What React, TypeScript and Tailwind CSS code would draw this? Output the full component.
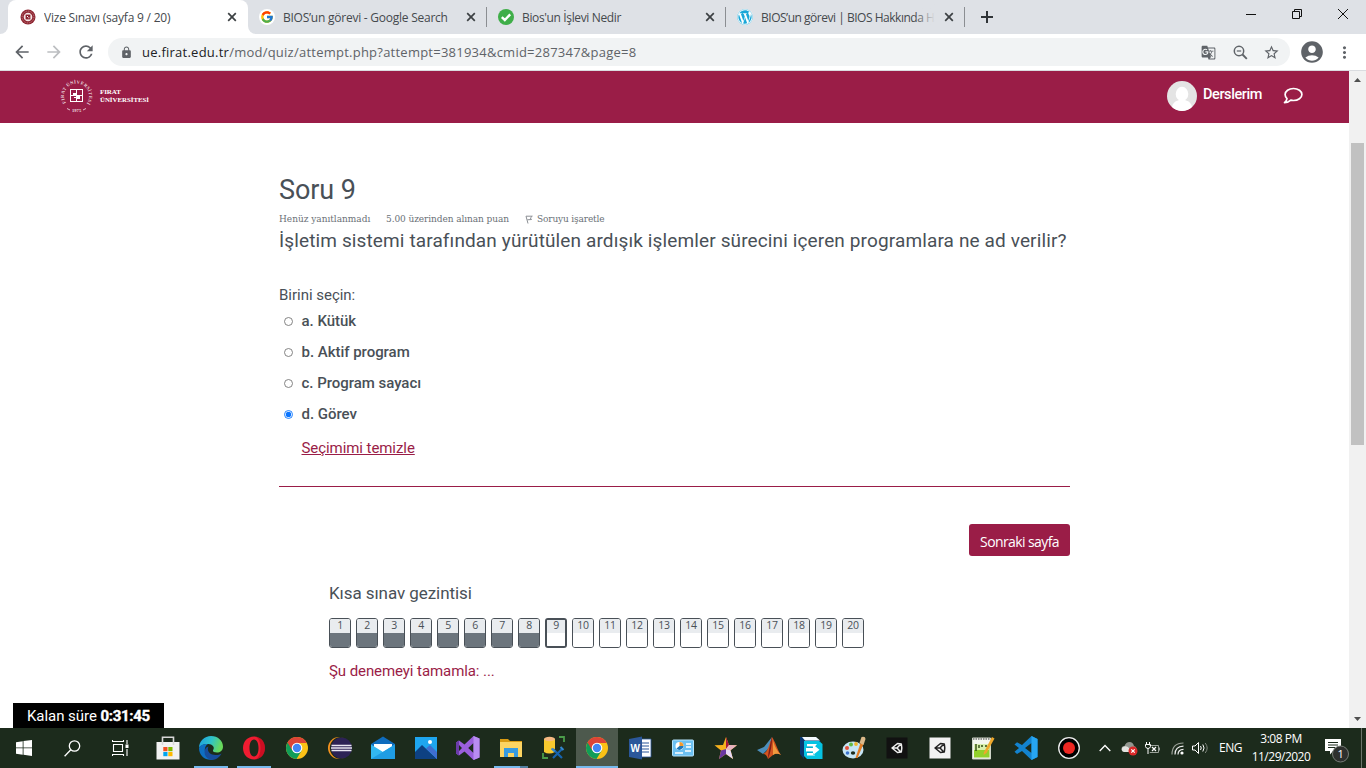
import React from "react";
import { FcGoogle } from "react-icons/fc";
import { FaWordpress } from "react-icons/fa";
import { MdLock, MdArrowBack, MdArrowForward, MdRefresh, MdStarBorder, MdGTranslate, MdAccountCircle, MdMoreVert } from "react-icons/md";

const UI = "font-['Open_Sans','Noto_Sans',sans-serif]";
const RB = "font-['Roboto',sans-serif]";

function CloseX() {
  return (
    <svg width="10" height="10" viewBox="0 0 10 10" className="shrink-0">
      <path d="M1.2 1.2 8.8 8.8M8.8 1.2 1.2 8.8" stroke="#3c4043" strokeWidth="1.7" fill="none" />
    </svg>
  );
}

function UniSeal() {
  return (
    <svg width="16" height="16" viewBox="0 0 16 16">
      <circle cx="8" cy="8" r="7.5" fill="#8d2430" />
      <circle cx="8" cy="8" r="5.9" fill="none" stroke="#c9898c" strokeWidth=".9" strokeDasharray="1 .8" />
      <circle cx="8" cy="8" r="4.3" fill="#f4e6e6" />
      <rect x="5.6" y="5.6" width="4.8" height="4.8" fill="#8d2430" />
      <path d="M7 7h1v1H7zM8.300 8.200h1v1h-1z" fill="#fff" />
    </svg>
  );
}

function GreenCheck() {
  return (
    <svg width="16" height="16" viewBox="0 0 16 16">
      <circle cx="8" cy="8" r="8" fill="#3fae49" />
      <path d="M3.8 8.2 6.8 11l5.4-5.6" stroke="#fff" strokeWidth="2.4" fill="none" />
    </svg>
  );
}

function Tab({ icon, title, className, fade }: { icon: React.ReactNode; title: string; className: string; fade?: boolean }) {
  return (
    <div className="flex h-[34px] w-[239px] shrink-0 items-center pl-3">
      <span className="flex w-4 shrink-0 justify-center">{icon}</span>
      <span className={`${UI} relative -top-px ml-2 w-[174px] overflow-hidden whitespace-nowrap`}>
        <span className={"text-[12px] text-[#45494d] " + className}>{title}</span>
        {fade && <span className="absolute inset-y-0 right-0 w-5 bg-gradient-to-r from-transparent to-[#dee1e6]" />}
      </span>
      <span className="ml-[9px] flex"><CloseX /></span>
    </div>
  );
}

function TabStrip() {
  return (
    <div className="flex h-[34px] bg-[#dee1e6]">
      <div className="flex w-2 items-end bg-white"><div className="h-full w-2 rounded-br-lg bg-[#dee1e6]" /></div>
      <div className="w-60 bg-[#dee1e6]"><div className="rounded-t-lg bg-white">
        <Tab icon={<UniSeal />} title="Vize Sınavı (sayfa 9 / 20)" className="tracking-[-0.22px]" />
      </div></div>
      <div className="-mr-2 w-2 bg-white"><div className="h-full rounded-bl-lg bg-[#dee1e6]" /></div>
      <div className="z-10 -ml-px flex items-center">
        <Tab icon={<span className="flex h-4 w-4 items-center justify-center rounded-full bg-white"><FcGoogle size={14} /></span>} title="BIOS’un görevi - Google Search" className="tracking-[-0.24px]" />
        <div className="-mr-px h-5 w-px bg-[#8b8e92]" />
        <Tab icon={<GreenCheck />} title="Bios'un İşlevi Nedir" className="tracking-[-0.36px]" />
        <div className="-mr-px h-5 w-px bg-[#8b8e92]" />
        <Tab icon={<span className="flex rounded-full bg-white text-[#1ba7d8]"><FaWordpress size={16} /></span>} title="BIOS’un görevi | BIOS Hakkında H" className="tracking-[-0.48px]" fade />
        <div className="-mr-px h-5 w-px bg-[#8b8e92]" />
      </div>
      <svg width="12" height="12" viewBox="0 0 12 12" className="mt-[11px] ml-[17px]"><path d="M6 0v12M0 6h12" stroke="#303438" strokeWidth="2" /></svg>
      <div className="mr-[17px] ml-auto flex items-start pt-2">
        <svg width="104" height="12" viewBox="0 0 104 12" fill="none" stroke="#111">
          <path d="M1 6.5h10" /><path d="M47.5 3.500h7v7h-7z M49.500 3.500v-2h7v7h-2" /><path d="m93 1 10 10m0-10-10 10" />
        </svg>
      </div>
    </div>
  );
}

function Toolbar() {
  return (
    <div className="flex h-[37px] items-center border-b border-[#dadce0] bg-white text-[#5f6368]">
      <MdArrowBack size={20} className="ml-3" />
      <MdArrowForward size={20} className="ml-3 text-[#bcbec1]" />
      <MdRefresh size={20} className="ml-3" />
      <div className="ml-3 flex h-7 w-[1182px] items-center rounded-full bg-[#f1f3f4] pl-3">
        <MdLock size={13} />
        <span className={`${UI} mt-0.5 ml-[9px] text-[13px] whitespace-nowrap tracking-[0.24px]`}>
          <span className="text-[#202124]">ue.firat.edu.tr</span>/mod/quiz/attempt.php?attempt=381934&amp;cmid=287347&amp;page=8
        </span>
        <div className="mr-[10px] ml-auto flex items-center gap-[17px]">
          <MdGTranslate size={15} />
          <svg width="15" height="15" viewBox="0 0 15 15" fill="none" stroke="#5f6368"><circle cx="6" cy="6" r="4.700" strokeWidth="1.500" /><path d="m9.500 9.500 4.300 4.300" strokeWidth="1.900" /><path d="M3.800 6h4.400" strokeWidth="1.200" /></svg>
          <MdStarBorder size={17} className="-ml-0.5" />
        </div>
      </div>
      <MdAccountCircle size={26} className="ml-[9px]" />
      <MdMoreVert size={19} className="ml-[10px]" />
    </div>
  );
}

function FiratLogo() {
  return (
    <svg width="94" height="34" viewBox="0 0 94 34" fill="#fff">
      <defs><path id="ring" d="M17.500 29.500A12.500 12.500 0 1 1 17.600 29.500" /></defs>
      <text fontFamily="Liberation Serif" fontSize="4.600" fontWeight="700" fillOpacity=".85"><textPath href="#ring" startOffset="12" textLength="54">FIRAT ÜNİVERSİTESİ</textPath></text>
      <text x="13" y="32.500" fontSize="4.600" fontFamily="Liberation Serif" fontWeight="700" fillOpacity=".85">1975</text>
      <path d="M8 29.500 11 31M27 29.500 24 31" stroke="#fff" strokeWidth=".7" />
      <g shapeRendering="crispEdges">
        <path d="M11 10h13v13H11zm1 1v11h11V11z" fillRule="evenodd" />
        <path d="M17 11h1v11h-1zM12 16h11v1H12zM14 14h3v2h-3zM18 17h3v3h-3zM15 18h2v1h-2z" />
      </g>
      <g fontFamily="Liberation Serif" fontSize="7" fontWeight="700">
        <text x="41" y="15" textLength="21">FIRAT</text><text x="41" y="23.200" textLength="49" lengthAdjust="spacingAndGlyphs">ÜNİVERSİTESİ</text>
      </g>
    </svg>
  );
}

function SiteHeader() {
  return (
    <header className="flex h-[52px] items-center bg-[#9a1d47] pl-[59px] text-white">
      <div className="pb-0.5"><FiratLogo /></div>
      <svg width="30" height="30" viewBox="0 0 30 30" className="mr-[6px] mb-0.5 ml-auto">
        <circle cx="15" cy="15" r="15" fill="#e4e4e4" />
        <ellipse cx="15" cy="13" rx="6.300" ry="7.200" fill="#fff" />
        <path d="M5 26q1-5.500 6-6.500l4-2 4 2q5 1 6 6.500-4.500 4-10 4T5 26z" fill="#fff" />
      </svg>
      <span className={`${RB} mb-1 w-[80px] text-[14.5px] font-medium tracking-[-0.42px]`}>Derslerim</span>
      <svg width="20" height="17" viewBox="0 0 20 17" className="mr-[46px] mb-1" fill="none" stroke="#fff" strokeWidth="1.700">
        <path d="M10.500 1.500c4.700 0 8.400 2.700 8.400 6s-3.700 6-8.400 6q-1.400 0-2.700-.4-2.600 2.500-6.300 2.500 2.300-1.800 2.500-4Q2.100 9.800 2.100 7.500c0-3.300 3.700-6 8.400-6z" strokeLinejoin="round" />
      </svg>
    </header>
  );
}

function Option({ label, checked }: { label: string; checked?: boolean }) {
  return (
    <label className="flex h-[31px] items-center pl-[5px]">
      <svg width="9" height="9" viewBox="0 0 9 9">
        <circle cx="4.500" cy="4.500" r="4" fill="#fff" stroke={checked ? "#0b75ff" : "#767676"} strokeWidth=".9" />
        {checked && <circle cx="4.500" cy="4.500" r="2.700" fill="#0b75ff" />}
      </svg>
      <span className="ml-[8.5px] text-[15px] font-medium tracking-[-0.03px]">{label}</span>
    </label>
  );
}

function QuizNav() {
  return (
    <div className="flex h-[30px] gap-[5px]">
      {Array.from({ length: 20 }, (_, i) => i + 1).map((n) => (
        <div key={n} className={"flex w-[22px] flex-col overflow-hidden rounded-[3px] border-[#495057] " + (n === 9 ? "border-2" : "border")}>
          <div className={`${UI} ${n === 9 ? "h-[13px] leading-[11px]" : "h-[14px] leading-[13px]"} bg-[#e9ecef] text-center text-[10.5px] tracking-[-0.3px] text-[#495057]`}>{n}</div>
          <div className={"flex-1 " + (n < 9 ? "bg-[#6c757d]" : "bg-white")} />
        </div>
      ))}
    </div>
  );
}

function QuizPage() {
  return (
    <main className={`${RB} flex h-[605px] flex-col pt-[51px] pl-[279px] text-[#495057]`}>
      <h1 className="h-8 text-[27px] leading-[32px] tracking-[-0.1px]">Soru 9</h1>
      <div className="flex h-[23px] items-center pt-px text-[10px] text-[#6b7177] font-['DejaVu_Serif_Condensed','DejaVu_Serif',serif] [font-stretch:condensed]">
        <span className="w-[107px] whitespace-nowrap tracking-[-0.02px]">Henüz yanıtlanmadı</span>
        <span className="w-[139px] whitespace-nowrap tracking-[-0.08px]">5.00 üzerinden alınan puan</span>
        <svg width="8" height="9" viewBox="0 0 8 9" className="mt-0.5 mr-1"><path d="M1 1.200h6.300L5.300 3l1.200 1.500-4.200.3M1 1.200l2 7.300" fill="none" stroke="#8b8f94" /></svg>
        <span className="whitespace-nowrap tracking-[-0.15px]">Soruyu işaretle</span>
      </div>
      <p className="h-7 text-[19px] leading-6 tracking-[0.125px] whitespace-nowrap">İşletim sistemi tarafından yürütülen ardışık işlemler sürecini içeren programlara ne ad verilir?</p>
      <div className="mt-[28px] h-[21px] text-[15px] leading-[21px] tracking-[-0.02px]">Birini seçin:</div>
      <div className="flex flex-col">
        <Option label="a. Kütük" /><Option label="b. Aktif program" /><Option label="c. Program sayacı" /><Option label="d. Görev" checked />
      </div>
      <a className="mt-[8px] ml-[22.5px] h-[20px] self-start text-[15px] leading-[20px] tracking-[-0.07px] text-[#9a1d47] underline">Seçimimi temizle</a>
      <div className="mt-7 w-[791px] border-t border-[#9a1d47]" />
      <div className="mt-[37px] flex w-[791px] justify-end">
        <button className={`${UI} h-8 w-[101px] rounded-[3px] bg-[#9a1d47] pt-0.5 text-[14px] tracking-[-0.6px] whitespace-nowrap text-white`}>Sonraki sayfa</button>
      </div>
      <section className="pl-[50px]">
        <h2 className="mt-[26px] h-[22px] text-[17px] leading-[22px] tracking-[-0.07px]">Kısa sınav gezintisi</h2>
        <div className="mt-[14px]"><QuizNav /></div>
        <a className="mt-[12px] block text-[15px] leading-[22px] tracking-[-0.08px] text-[#9a1d47]">Şu denemeyi tamamla: ...</a>
      </section>
      <div className="mt-auto -ml-[266px] flex h-[25px] w-[151px] items-center bg-black pt-0.5 pl-[14px] text-[15px] tracking-[-0.05px] whitespace-pre text-white">Kalan süre <b className="tracking-[-0.3px] [-webkit-text-stroke:0.4px_white]">0:31:45</b></div>
    </main>
  );
}

function Scrollbar() {
  return (
    <div className="flex w-[17px] flex-col items-center bg-[#f1f1f1] py-[7px]">
      <svg width="7" height="4" viewBox="0 0 7 4"><path d="M0 4h7L3.500 0z" fill="#505050" /></svg>
      <div className="mt-[61px] h-[302px] w-[13px] bg-[#c1c1c1]" />
      <svg width="7" height="4" viewBox="0 0 7 4" className="mt-auto"><path d="M0 0h7L3.500 4z" fill="#505050" /></svg>
    </div>
  );
}

const Svg = ({ children }: { children: React.ReactNode }) => <svg width="24" height="24" viewBox="0 0 24 24">{children}</svg>;

const Chrome = () => (
  <Svg>
    <circle cx="12" cy="12" r="11" fill="#fbc116" />
    <path d="M2.500 6.500A11 11 0 0 0 11.500 23L16.700 14.500 12 12z" fill="#109d58" />
    <path d="M2.500 6.500 7.300 14.500 12 7h9.700A11 11 0 0 0 2.500 6.500z" fill="#dc4437" />
    <circle cx="12" cy="12" r="5.300" fill="#fff" /><circle cx="12" cy="12" r="4.200" fill="#4285f4" />
  </Svg>
);

const Unity = ({ dark }: { dark?: boolean }) => (
  <Svg>
    <rect x="1.500" y="1.500" width="21" height="21" fill={dark ? "#111" : "#f2f2f2"} />
    <path d="m7 12 5.500-4.500 3.800.5.500 4-.5 4-3.800.5zM7 12h5l3.800-4M12 12l3.800 4" fill="none" stroke={dark ? "#eee" : "#222"} strokeWidth="1.500" strokeLinejoin="round" />
  </Svg>
);

const apps: { name: string; icon: React.ReactNode; state?: "open" | "stack" | "active" }[] = [
  { name: "store", icon: <Svg><path d="M.5 6h23v17.500H.5z" fill="#f2f2f2" /><path d="M6.500 9V1.200h11V9" fill="none" stroke="#d8d8d8" strokeWidth="1.600" /><path d="M7.300 11h4.200v4.200H7.300z" fill="#f25022" /><path d="M12.300 11h4.200v4.200h-4.200z" fill="#7fba00" /><path d="M7.300 16h4.200v4.200H7.300z" fill="#00a4ef" /><path d="M12.300 16h4.200v4.200h-4.200z" fill="#ffb900" /></Svg> },
  { name: "edge", state: "open", icon: <Svg>
    <defs><linearGradient id="edgeTop" x1="0" x2="1" y1="0" y2=".3"><stop stopColor="#1b9de2" /><stop offset=".55" stopColor="#2fc4c8" /><stop offset="1" stopColor="#69da5c" /></linearGradient></defs>
    <path d="M0 12C0 5 5.500 0 12 0c7 0 12 5 12 10.500 0 4-3 6-6 6-2.500 0-4.500-1-4-2.300 2.500-3-1-6.200-4.500-6.200C5 8 1 9.500 0 12z" fill="url(#edgeTop)" />
    <path d="M0 12C1.500 8.500 5.500 7.800 9 8c-3 2-4 5-2.500 9 1.500 3.700 5 6 8.500 6.400C7 25.500 0 20 0 12z" fill="#0e6fc2" />
    <path d="M9.500 10.500c-2 4 1 8.500 7 8.500 2.500 0 4.500-.5 6-1.500-2.500 5-7.500 7.200-11.500 6C4 21 4 12 9.500 10.500z" fill="#174d9c" />
  </Svg> },
  { name: "opera", state: "open", icon: <Svg><path fillRule="evenodd" d="M12 .5C18.500.5 23 5.500 23 12s-4.500 11.500-11 11.500S1 18.500 1 12 5.500.5 12 .5zm0 3C9 3.500 7.500 7.500 7.500 12s1.500 8.500 4.500 8.500 4.500-4 4.500-8.500S15 3.500 12 3.500z" fill="#f01c31" /><path d="M14 .7C19.500 1.500 23 6.500 23 12s-3.500 10.500-9 11.300c3-2 4.500-6 4.500-11.300S17 2.700 14 .7z" fill="#a70014" opacity=".5" /></Svg> },
  { name: "chrome", icon: <Chrome /> },
  { name: "eclipse", icon: <Svg><circle cx="11" cy="12" r="11" fill="#f7941e" /><circle cx="12.800" cy="12" r="11" fill="#1c2b1c" /><circle cx="13.500" cy="12" r="10.500" fill="#2c2255" /><path d="M3.500 9.500H23.500M3 12h21M3.500 14.500H23.500" stroke="#e9e7f2" strokeWidth="1.300" /></Svg> },
  { name: "mail", icon: <Svg><path d="M0 8 12 .5 24 8v4H0z" fill="#0f6cbd" /><path d="M3 8h18v8H3z" fill="#fff" /><path d="M0 8.500 12 16l12-7.500V23H0z" fill="#32b8f2" /><path d="M0 23 24 8.500V23z" fill="#1f9de4" /></Svg> },
  { name: "photos", icon: <Svg><path d="M1 1h22v22H1z" fill="#1ea6f0" /><path d="m1 16 7-7 15 14H1z" fill="#0e4182" /><path d="m12 12.500 4-3.500 7 7v7z" fill="#3f6ed0" /><circle cx="16" cy="6" r="2" fill="#fff" /></Svg> },
  { name: "visual-studio", icon: <Svg><path fillRule="evenodd" d="m17.500 0 6 2.500v19l-6 2.500-9-8.500L3 19.500 0 17.500v-11l3-2 5.500 4zm0 7-5.300 5 5.300 5zM3 9v6l3-3z" fill="#9a5fdc" /><path d="m17.500 0 6 2.500v19l-6 2.500z" fill="#b98cf2" /><path d="M0 6.500 3 4.500v15l-3-2z" fill="#6b3ba9" /></Svg> },
  { name: "explorer", state: "stack", icon: <Svg><path d="M1 3h8l2 2h12v5H1z" fill="#d99b12" /><path d="M1 6h22v15H1z" fill="#fcd462" /><path d="M5 12h14v9h-4v-4H9v4H5z" fill="#379be0" /></Svg> },
  { name: "db-tools", icon: <Svg><path d="M2 3v13q5 3 11 0V3z" fill="#f7c92e" /><ellipse cx="7.500" cy="3" rx="5.500" ry="2.200" fill="#f5b982" /><path d="M17 1h5v5M1 17v5h5" fill="none" stroke="#4b9c4a" strokeWidth="1.800" /><path d="m11 13 9 9M20 13l-9 9" stroke="#1764b0" strokeWidth="2.200" /><path d="m9.500 12.500 3.500 3M18.500 11l3 3" stroke="#3387d0" strokeWidth="2" /></Svg> },
  { name: "chrome-active", state: "active", icon: <Chrome /> },
  { name: "word", icon: <Svg><path d="M12 3h11v18H12z" fill="#fff" stroke="#2b579a" strokeWidth=".8" /><path d="M14 7h7M14 10h7M14 13h7M14 16h7" stroke="#2b579a" strokeWidth="1.200" /><path d="m1 3 13-2.500v23L1 21z" fill="#2b579a" /><text x="2.500" y="16" fontSize="10" fontWeight="700" fill="#fff" fontFamily="Liberation Sans">W</text></Svg> },
  { name: "control-panel", icon: <Svg><rect x="1.500" y="4" width="21" height="16" rx="1" fill="#6cc0f1" stroke="#b5e3fb" /><circle cx="8.500" cy="10" r="4" fill="#fff" /><path d="M8.500 10V6a4 4 0 0 1 4 4z" fill="#f39a2e" /><path d="M8.500 10h4a4 4 0 0 1-7 2.500z" fill="#1d76b8" /><path d="M15 8h5M15 11h5M4 17h8M14 15h6" stroke="#fff" strokeWidth="1.500" /></Svg> },
  { name: "star", icon: <Svg><path d="m12 1 3 8 8 .3-6.500 5L19 23l-7-5-7 5 2-8.500L.5 9.300 9 9z" fill="#f6b11d" /><path d="m12 1 3 8-3 4z" fill="#a51642" /><path d="m15 9 8 .3-6.500 5L12 13z" fill="#e7b3c4" /><path d="m16.500 14.300 2.500 8.700-7-5v-5z" fill="#e7d7f6" /><path d="m12 13 0 5-7 5 2-8.500z" fill="#6a36a2" /></Svg> },
  { name: "matlab", icon: <Svg><path d="m0 14 7-3 4-5 4-5-3 11-6 6z" fill="#4c8fbd" /><path d="M15 1c3 4 5 12 9 18-4-2-6-1-8 0l-5 4c-1-3-2-5-5-5 5-2 6-9 9-17z" fill="#d35421" /><path d="M15 1c0 8-1 14-4 22 0-7 2-14 4-22z" fill="#7c1c18" /><path d="M16 5c2 6 4 10 8 14-4-2-6-1-8 0z" fill="#f09a3e" /></Svg> },
  { name: "arrow-app", icon: <Svg><path d="M5 6 2 3v14l3 6z" fill="#0a3870" /><path d="M1 1h16l5 5H5v17l-4-5z" fill="#0a3870" /><path d="M3 1h14l4 3.500H6z" fill="#f5fbff" /><path d="M5 5h15l3.500 3v15H8l-3-3z" fill="#06c3e3" /><path d="M8 8h10l-2 2.500H8zM8 19.500h8L14 17H8zM7 12h7V8.500l6.500 5.200L14 19v-3.500H7z" fill="#fff" /><path d="M8 11.200h5.500M8 16.300h5.500" stroke="#06a0c3" strokeWidth=".8" /></Svg> },
  { name: "paint", icon: <Svg><ellipse cx="11" cy="14" rx="10.500" ry="8.500" fill="#c6e5f5" /><ellipse cx="11" cy="17" rx="2.200" ry="1.700" fill="#1c2b1c" /><circle cx="5" cy="12" r="2" fill="#e3513b" /><circle cx="9" cy="8.500" r="2" fill="#62b944" /><circle cx="14" cy="8" r="1.900" fill="#efb42c" /><circle cx="5.500" cy="17" r="1.800" fill="#3d74ce" /><path d="m13.500 22 5-15 3 1-6 14z" fill="#e17d25" /><path d="m17.500 7 2-6q4-1 4 2l-2 6z" fill="#dcb98a" /></Svg> },
  { name: "unity-dark", icon: <Unity dark /> },
  { name: "unity-light", icon: <Unity /> },
  { name: "notepad", icon: <Svg><path d="M1.500 2h18v21h-18z" fill="#f3f6ee" stroke="#cfd5c8" /><path d="M3 9h15.500v12.500H3z" fill="#92d12b" /><path d="M3 8h15v6H3z" fill="#d8f0ac" /><path d="M2 3h17" stroke="#777" strokeWidth="1.500" strokeDasharray="1.500 1" /><path d="M5 8v7M8 9v3M10 10h2M14 10h2" stroke="#304a10" strokeWidth="1.400" /><path d="m13 16 8-15 2.500 1.500-8 14.500-3 2z" fill="#eea82c" /></Svg> },
  { name: "vscode", icon: <Svg><path fillRule="evenodd" d="m17.500 0 6 3v18l-6 3L8 15l-5 3-2.500-2.300L5 12 .5 8.500 3 6.200 8 9zm0 7L11 12l6.500 5z" fill="#1383cf" /><path d="m17.500 0 6 3v18l-6 3z" fill="#27a6f2" /></Svg> },
  { name: "recorder", icon: <Svg><circle cx="12" cy="12" r="10.300" fill="#000" stroke="#eee" strokeWidth="1.300" /><circle cx="12" cy="12" r="6" fill="#ee2722" /></Svg> },
];

function Tray() {
  return (
    <div className={`${UI} flex h-full flex-1 items-center text-white`}>
      <svg width="12" height="8" viewBox="0 0 12 8" className="mr-2.5 ml-[9px]"><path d="m.7 7 5.300-5.500L11.300 7" fill="none" stroke="#fff" strokeWidth="1.300" /></svg>
      <svg width="17" height="15" viewBox="0 0 17 15"><path d="M3.500 11a3 3 0 0 1 0-6q1.500-4 5-4 3.500 0 4.500 4 2.500.5 2.500 3v3z" fill="#92968f" /><path d="M3 11a2.800 2.800 0 0 1 0-5.500q3-1 5 1.500v4z" fill="#e3e3e0" /><circle cx="12" cy="10" r="4.500" fill="#db2929" /><path d="m10.300 8.300 3.400 3.400m0-3.400-3.400 3.400" stroke="#fff" strokeWidth="1.200" /></svg>
      <svg width="16" height="13" viewBox="0 0 16 13" className="ml-[7px]" fill="none" stroke="#dedede"><path d="M4.500 3.500h9v7H4.800M14.500 5.500v3" stroke="#9ba29a" /><path d="M1.500 0v2.500M4.500 0v2.500M.5 2.500h5v2q-.5 2-2.500 2t-2.500-2zM3 6.500V12" stroke="#fff" /><path d="m7 5 4 4m0-4L7 9" stroke="#fff" strokeWidth="1.200" /></svg>
      <svg width="13" height="13" viewBox="0 0 13 13" className="ml-[10px]" fill="none" stroke="#eee" strokeWidth="1.200"><path d="M1 12.500Q1 1 12.500 1" stroke="#9aa097" /><path d="M4 12.500Q4 4.500 12.500 4.200M7 12.500q0-5 5.500-5.200" /><circle cx="11" cy="11" r="1.600" fill="#fff" stroke="none" /></svg>
      <svg width="17" height="14" viewBox="0 0 17 14" className="ml-2" fill="none" stroke="#fff"><path d="M.5 5h2.500l3.500-3.500v11L3 9H.5z" /><path d="M8.500 5q1.500 2 0 4M10.800 3.500q2.500 3.500 0 7" /><path d="M13.200 2q4 5 0 10" stroke="#80877e" /></svg>
      <span className="ml-[10px] w-[25px] text-[12px] tracking-[-0.5px]">ENG</span>
      <div className="ml-[6px] w-[62px] text-center text-[12px] leading-[18px] tracking-[-0.5px] whitespace-nowrap"><div>3:08 PM</div><div>11/29/2020</div></div>
      <svg width="26" height="26" viewBox="0 0 26 26" className="mt-1 ml-[13px]"><path d="M0 2h16v12H8l-3 3.500V14H0z" fill="#fff" /><path d="M3 5.500h10M3 8h10M3 10.500h7" stroke="#1c2b1c" /><circle cx="15.500" cy="17" r="8" fill="#2e302e" stroke="#777c77" /><text x="12.500" y="21" fontSize="11" fill="#fff" fontFamily="Open Sans">1</text></svg>
      <div className="mr-[4px] ml-auto h-full w-px bg-[#6b756b]" />
    </div>
  );
}

function Taskbar() {
  return (
    <footer className="flex h-10 items-center bg-[#1c2b1c]">
      <svg width="16" height="16" viewBox="0 0 16 16" className="ml-4" fill="#fff"><path d="M0 2.200 6.700 1.200v6.300H0zM7.500 1.100 16 0v7.500H7.500zM0 8.300h6.700v6.400L0 13.700zM7.500 8.300H16V16l-8.500-1.200z" /></svg>
      <svg width="17" height="17" viewBox="0 0 17 17" className="ml-8" fill="none" stroke="#fff" strokeWidth="1.300"><circle cx="10.500" cy="6" r="5.200" /><path d="M6.800 9.800.6 16.300" /></svg>
      <svg width="17" height="16" viewBox="0 0 17 16" className="ml-[31px]" fill="none" stroke="#fff" strokeWidth="1.100"><path d="M1 1.500h10M1 14.500h10M1.500 4.500h9v7h-9zM.5 0v2M11.500 0v2M.5 14v2M11.500 14v2M15 0v4M15 9v7" /><path d="M13.500 4.500h3v3.500h-3z" fill="#fff" stroke="none" /></svg>
      <div className="ml-[18px] grid h-full w-[943px] shrink-0 grid-cols-22">
        {apps.map((a) => (
          <div key={a.name} className={"flex flex-col items-center " + (a.state === "active" ? "bg-[#4d594d]" : "")}>
            <div className="flex h-[38px] items-center pt-0.5">{a.icon}</div>
            {a.state === "open" && <div className="h-0.5 w-[34px] bg-[#76b9ed]" />}
            {a.state === "active" && <div className="h-0.5 w-full bg-[#76b9ed]" />}
            {a.state === "stack" && <div className="flex h-0.5 w-[34px]"><div className="flex-1 bg-[#76b9ed]" /><div className="w-2 bg-[#527fa0]" /></div>}
          </div>
        ))}
      </div>
      <Tray />
    </footer>
  );
}

export default function App() {
  return (
    <div className="flex h-[768px] w-[1366px] flex-col overflow-hidden bg-white">
      <TabStrip />
      <Toolbar />
      <div className="flex h-[657px]">
        <div className="w-[1349px]"><SiteHeader /><QuizPage /></div>
        <Scrollbar />
      </div>
      <Taskbar />
    </div>
  );
}
